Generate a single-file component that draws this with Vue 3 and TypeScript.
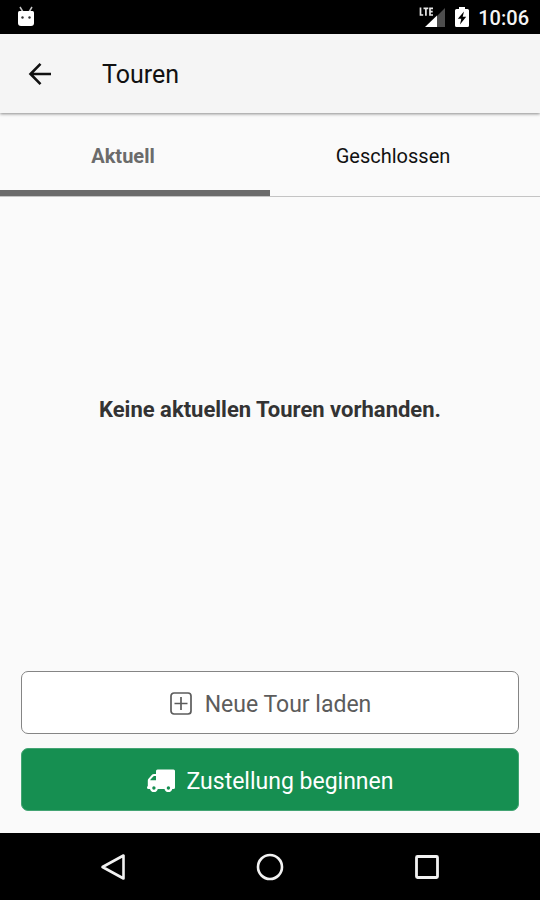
<script setup lang="ts">
import { computed, ref } from 'vue'

type TabId = 'current' | 'closed'

interface Tab {
  id: TabId
  label: string
  empty: string
}

const tabs: Tab[] = [
  { id: 'current', label: 'Aktuell', empty: 'Keine aktuellen Touren vorhanden.' },
  { id: 'closed', label: 'Geschlossen', empty: 'Keine geschlossenen Touren vorhanden.' },
]

const active = ref<TabId>('current')
const emptyText = computed(() => tabs.find((t) => t.id === active.value)?.empty ?? '')
</script>

<template>
  <div class="screen">
    <div class="status-bar">
      <svg width="18" height="22" viewBox="0 0 18 22" aria-hidden="true">
        <path d="M3 1l3 5M15 1l-3 5" stroke="#c8c8c8" stroke-width="1.5" />
        <path d="M1 6.500q0-1.500 1.500-1.500h13q1.500 0 1.500 1.500V17q0 3-3 3H4q-3 0-3-3z" fill="#fff" />
        <circle cx="5.500" cy="11.500" r="1.200" fill="#333" />
        <circle cx="12.500" cy="11.500" r="1.200" fill="#333" />
      </svg>
      <div class="status-right">
        <svg width="27" height="22" viewBox="0 0 27 22" aria-hidden="true">
          <path d="M26 2v19h-8V10z" fill="#4d4d4d" />
          <path d="M18 9.500V21H6z" fill="#fff" />
          <path d="M1.500 1.500v7.500H4.200M4.500 2.300h4.800M6.900 2.300V9.700M14 2.300h-3v6.700h3M11 5.600h2.700" fill="none" stroke="#e8e8e8" stroke-width="1.700" />
        </svg>
        <svg width="14" height="22" viewBox="0 0 14 22" aria-hidden="true">
          <path d="M4 1h6v2h2.500q1.500 0 1.500 1.500v15q0 1.500-1.500 1.500h-11Q0 21 0 19.500v-15Q0 3 1.500 3H4z" fill="#fff" />
          <path d="M9 5.500L2.800 12.800h3.500L5 18.500l6.200-7.700H7.700z" fill="#000" />
        </svg>
        <span class="clock">10:06</span>
      </div>
    </div>

    <header class="app-bar">
      <button class="back" type="button" aria-label="Zurück">
        <svg width="24" height="24" viewBox="0 0 24 24" aria-hidden="true">
          <path d="M23 12H2.500M12.500 1.800L2.500 12l10 10.200" fill="none" stroke="#111" stroke-width="2.600" />
        </svg>
      </button>
      <h1 class="title">Touren</h1>
    </header>

    <div class="tabs" role="tablist">
      <button
        v-for="tab in tabs"
        :key="tab.id"
        class="tab"
        :class="{ active: tab.id === active }"
        type="button"
        role="tab"
        :aria-selected="tab.id === active"
        @click="active = tab.id"
      >
        {{ tab.label }}
      </button>
    </div>

    <main class="content">
      <p class="empty">{{ emptyText }}</p>
    </main>

    <div class="actions">
      <button class="action outline" type="button">
        <svg width="24" height="24" viewBox="0 0 24 24" aria-hidden="true">
          <rect x="2" y="1" width="20" height="21" rx="3" fill="none" stroke="#5c5c5c" stroke-width="1.700" />
          <path d="M12 5v13M5.500 11.500h13" stroke="#5c5c5c" stroke-width="1.700" />
        </svg>
        <span class="label">Neue Tour laden</span>
      </button>
      <button class="action primary" type="button">
        <svg width="28" height="24" viewBox="0 0 28 24" aria-hidden="true">
          <path
            d="M10.500 0.500H26.500q1.500 0 1.500 1.500V18.500q0 1.500-1.500 1.500H25.300a4 4 0 0 1-7.800 0H10.800a4 4 0 0 1-7.800 0H1.500Q0 20 0 18.500q0-1 .8-1.500V11.500q0-1 .7-1.800L5.200 5.600Q5.900 5 7 5H9V2Q9 .5 10.500 .5z"
            fill="#fff"
          />
          <path d="M9 7H7.200q-.4 0-.7.300L3.300 10.700V11.200H9z" fill="#168f51" />
          <circle cx="6.900" cy="19" r="1.700" fill="#168f51" />
          <circle cx="21.400" cy="19" r="1.700" fill="#168f51" />
        </svg>
        <span class="label">Zustellung beginnen</span>
      </button>
    </div>

    <nav class="nav-bar" aria-label="Systemnavigation">
      <button type="button" aria-label="Zurück">
        <svg width="28" height="28" viewBox="0 0 28 28" aria-hidden="true">
          <path d="M24.500 2.500v23L3.500 14z" fill="none" stroke="#f2f2f2" stroke-width="2.600" stroke-linejoin="round" />
        </svg>
      </button>
      <button type="button" aria-label="Startbildschirm">
        <svg width="28" height="28" viewBox="0 0 28 28" aria-hidden="true">
          <circle cx="14" cy="14" r="12" fill="none" stroke="#f2f2f2" stroke-width="2.600" />
        </svg>
      </button>
      <button type="button" aria-label="Übersicht">
        <svg width="28" height="28" viewBox="0 0 28 28" aria-hidden="true">
          <rect x="3.500" y="3.500" width="21" height="21" rx="1" fill="none" stroke="#f2f2f2" stroke-width="2.800" />
        </svg>
      </button>
    </nav>
  </div>
</template>

<style>
body {
  margin: 0;
  background: #fafafa;
}
</style>

<style scoped>
.screen {
  display: flex;
  flex-direction: column;
  min-height: 100vh;
  background: #fafafa;
  color: #111;
  font-family: Roboto, 'Liberation Sans', sans-serif;
}

button {
  margin: 0;
  padding: 0;
  border: 0;
  background: none;
  color: inherit;
  font: inherit;
  cursor: pointer;
}

svg {
  display: block;
  flex: none;
}

.status-bar {
  display: flex;
  align-items: center;
  justify-content: space-between;
  height: 34px;
  padding: 0 11px 0 17px;
  background: #000;
}

.status-right {
  display: flex;
  align-items: center;
  gap: 9px;
}

.clock {
  padding-top: 2px;
  color: #f4f4f4;
  font-size: 20px;
  font-weight: 500;
  line-height: 24px;
}

.app-bar {
  display: flex;
  align-items: center;
  gap: 50px;
  height: 79px;
  padding: 0 28px;
  background: #f5f5f5;
  box-shadow: 0 1px 3px rgba(0, 0, 0, 0.45);
  z-index: 1;
}

.title {
  margin: 0;
  padding-top: 2px;
  font-size: 25px;
  font-weight: 400;
  line-height: 32px;
}

.tabs {
  display: flex;
  height: 83px;
  border-bottom: 1px solid #c4c4c4;
}

.tab {
  flex: 1;
  padding: 8px 24px 0 0;
  border-bottom: 6px solid transparent;
  font-size: 20px;
  line-height: 24px;
}

.tab.active {
  border-bottom-color: #6b6b6b;
  color: #6b6b6b;
  font-weight: 700;
}

.content {
  display: flex;
  flex: 1;
  align-items: center;
  justify-content: center;
  padding: 0 22px;
}

.empty {
  margin: 0;
  color: #333;
  font-size: 22px;
  font-weight: 700;
  line-height: 32px;
  text-align: center;
}

.actions {
  display: flex;
  flex-direction: column;
  gap: 14px;
  padding: 48px 21px 22px;
}

.action {
  display: flex;
  align-items: center;
  justify-content: center;
  gap: 12px;
  height: 63px;
  padding-top: 2px;
  border-radius: 7px;
  font-size: 23px;
  line-height: 32px;
}

.label {
  padding-top: 2px;
}

.outline {
  border: 1px solid #858585;
  background: #fff;
  color: #5c5c5c;
}

.primary {
  border: 1px solid #43a473;
  background: #168f51;
  color: #fff;
}

.nav-bar {
  display: flex;
  align-items: center;
  justify-content: center;
  gap: 129px;
  height: 67px;
  background: #000;
}
</style>
